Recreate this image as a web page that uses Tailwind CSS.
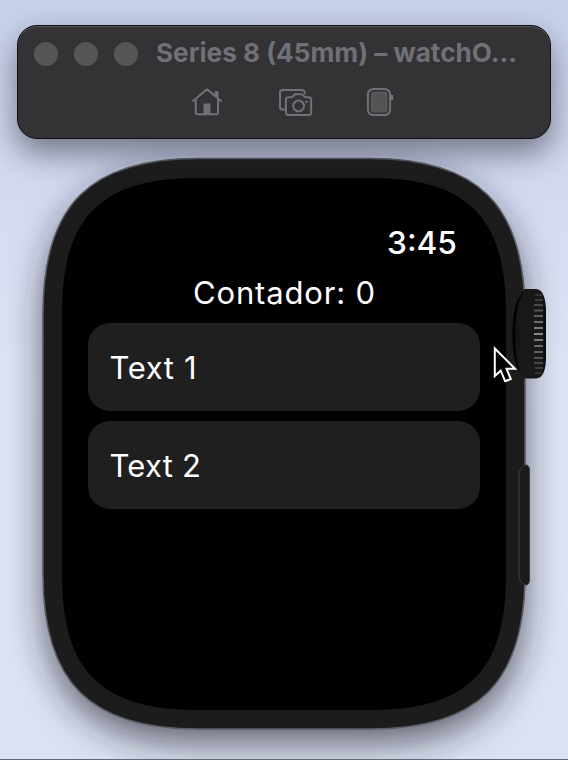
<!DOCTYPE html>
<html lang="es">
<head>
<meta charset="utf-8">
<title>Series 8 (45mm)</title>
<script src="https://cdn.jsdelivr.net/npm/@tailwindcss/browser@4"></script>
</head>
<body class="relative h-[760px] w-[568px] overflow-hidden bg-gradient-to-b from-[#c8d0ec] via-[#dfe5f5] to-[#dce2f3] font-['Inter','Liberation_Sans',sans-serif]">
  <div class="flex h-[760px] flex-col pt-[25px]">
    <header class="relative z-10 ml-[17px] flex h-[114px] w-[534px] flex-col rounded-[20px] border border-[#101114] bg-[#333335] shadow-[inset_0_1px_0_#56585c,0_14px_32px_rgba(35,37,45,0.55)]">
      <div class="flex h-[56px] items-center pl-4">
        <div class="flex gap-4">
          <span class="size-6 rounded-full bg-[#565658]"></span>
          <span class="size-6 rounded-full bg-[#565658]"></span>
          <span class="size-6 rounded-full bg-[#565658]"></span>
        </div>
        <svg class="ml-[18px] h-[36px] w-[366px]" viewBox="0 0 366 36"><text x="0" y="26" textLength="361" lengthAdjust="spacingAndGlyphs" fill="#707076" font-size="26" font-weight="700">Series 8 (45mm) – watchO...</text></svg>
      </div>
      <div class="flex h-[40px] items-center pl-[173px] text-[#717176]">
        <svg class="h-[30px] w-[32px]" viewBox="191 87 32 30" fill="none" stroke="currentColor" stroke-width="2" stroke-linejoin="round" stroke-linecap="round"><path d="M193 101L207 89.2L221 101M195.8 99V112.5Q195.8 114.3 197.6 114.3H216.2Q218 114.3 218 112.5V99M215.7 96V92H217.5V98"/><path d="M203.5 103.5h7V114h-7z" fill="currentColor" stroke="none"/></svg>
        <svg class="ml-[54px] h-[30px] w-[36px]" viewBox="277 87 36 30" fill="none" stroke="currentColor" stroke-width="2" stroke-linejoin="round"><path d="M285 109.5H282.5Q280 109.5 280 107V92.5Q280 90 282.5 90H302Q304.7 90 304.9 94"/><path d="M288.5 97.2H291.5Q292.5 97.2 293.2 96.2L294.3 94.8Q294.9 94.2 295.8 94.2H301.5Q302.4 94.2 303 94.8L304.2 96.2Q305 97.2 306 97.2H308.5Q311.2 97.2 311.2 99.8V112.4Q311.2 115 308.5 115H288.5Q285.9 115 285.9 112.4V99.8Q285.9 97.2 288.5 97.2Z"/><circle cx="298.6" cy="106" r="5.4"/><circle cx="306.4" cy="101.7" r="1.3" fill="currentColor" stroke="none"/></svg>
        <svg class="ml-[53px] h-[32px] w-[30px]" viewBox="366 87 30 32" fill="none" stroke="currentColor" stroke-width="2"><rect x="367.9" y="89.9" width="22.2" height="26.2" rx="5.5"/><rect x="371.2" y="93" width="15.8" height="20" rx="2" fill="#545456" stroke="#626266" stroke-width=".8"/><path d="M392 96v5" stroke-width="2.4"/></svg>
      </div>
    </header>

    <main class="relative mt-[19px] ml-[43px] flex h-[571px] w-[482px] flex-col pt-[64px]">
      <svg class="absolute -top-[158px] -left-[43px] h-[760px] w-[568px]" viewBox="0 0 568 760" fill="none">
        <defs>
          <filter id="soft" x="-30%" y="-30%" width="160%" height="160%"><feGaussianBlur stdDeviation="18"/></filter>
          <linearGradient id="crown" x1="0" x2="1"><stop stop-color="#101010"/><stop offset=".25" stop-color="#181818"/><stop offset=".85" stop-color="#191919"/><stop offset="1" stop-color="#080808"/></linearGradient>
          <linearGradient id="ridge" x1="0" y1="290" x2="0" y2="378" gradientUnits="userSpaceOnUse"><stop stop-color="#282828"/><stop offset=".5" stop-color="#868686"/><stop offset="1" stop-color="#282828"/></linearGradient>
          <path id="case" d="M43 313.500C43 205 90 158.500 198 158.500H370C478 158.500 525 205 525 313.500V574C525 682.500 478 729 370 729H198C90 729 43 682.500 43 574Z"/>
        </defs>
        <use href="#case" y="14" fill="#23252d" fill-opacity=".68" filter="url(#soft)"/>
        <use href="#case" fill="#1c1c1c" stroke="#5b5e66" stroke-width="1.5"/>
        <path d="M62 313C62 217 101 178 197 178H371C467 178 506 217 506 313V575C506 671 467 710 371 710H197C101 710 62 671 62 575Z" fill="#000"/>
        <path d="M525 289H536C543 289 546 299 546 312V356C546 370 543 378.500 536 378.500H525C517 375 513 359 513 334C513 309 517 293 525 289Z" fill="url(#crown)"/>
        <path d="M524 292C518 299 515 314 515 334C515 353 517 365 520 371C514 364 512.500 350 512.500 334C512.500 312 516 298 524 292Z" fill="#000"/>
        <path fill="url(#ridge)" d="M535 294h7v2h-7zM535 299h8v2h-8zM534 304h9v2h-9zM534 309.500h9v2h-9zM534 315h9v2h-9zM534 321h9v2h-9zM534 327h9v2h-9zM534 333h9v2h-9zM534 339h9v2h-9zM534 345h9v2h-9zM534 351h9v2h-9zM534 357h9v2h-9zM534 362h9v2h-9zM535 367h8v2h-8zM535 372h7v2h-7z"/>
        <path d="M525 465H527Q529.500 466 529.500 470V580Q529.500 584 527 585H525Q519 582 519 575V475Q519 468 525 465Z" fill="#1b1b1b" stroke="#404040" stroke-width="1"/>
      </svg>
      <svg class="relative ml-[340px] h-[42px] w-[80px] shrink-0" viewBox="0 0 80 42"><text x="4" y="32" textLength="70" lengthAdjust="spacingAndGlyphs" fill="#fff" font-size="31.5" font-weight="500">3:45</text></svg>
      <svg class="relative mt-[8px] ml-[148px] h-[42px] w-[188px] shrink-0" viewBox="0 0 188 42"><text x="2" y="32" textLength="182" lengthAdjust="spacing" fill="#fff" font-size="31">Contador: 0</text></svg>
      <div class="relative mt-[9px] ml-[45px] flex w-[392px] flex-col gap-[10px]">
        <div class="flex h-[88px] items-center rounded-[22px] bg-[#1f1f1f] pl-[20px]">
          <svg class="h-[42px] w-[100px]" viewBox="0 0 100 42"><text x="1.5" y="33" textLength="87" lengthAdjust="spacing" fill="#fff" font-size="31">Text 1</text></svg>
        </div>
        <div class="flex h-[88px] items-center rounded-[22px] bg-[#1f1f1f] pl-[20px]">
          <svg class="h-[42px] w-[100px]" viewBox="0 0 100 42"><text x="1.5" y="33" textLength="91.5" lengthAdjust="spacing" fill="#fff" font-size="31">Text 2</text></svg>
        </div>
      </div>
    </main>
  </div>
  <svg class="absolute top-[342px] left-[490px] z-20 h-[44px] w-[30px]" viewBox="490 342 30 44"><path d="M494.800 348.500V376L500.700 370.700L505.200 381.300L510.800 379L506.500 368.700H515Z" fill="#050505" stroke="#fff" stroke-width="2"/></svg>
  <div class="absolute bottom-0 left-0 h-px w-full bg-[#62677a]"></div>
</body>
</html>
